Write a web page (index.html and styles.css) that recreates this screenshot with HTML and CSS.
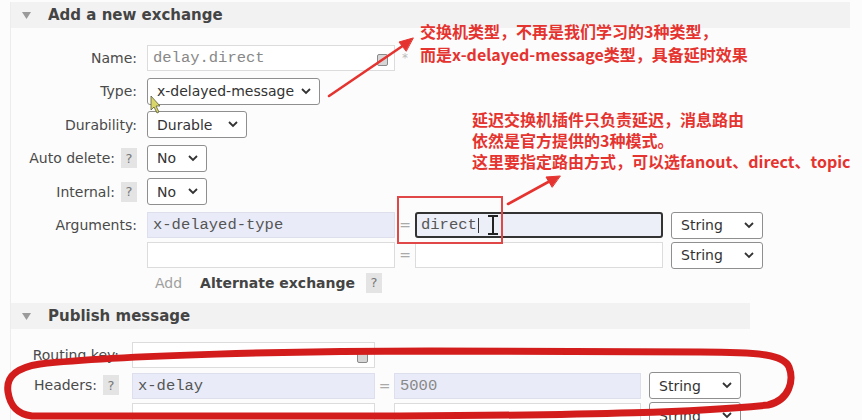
FILE: index.html
```html
<!DOCTYPE html>
<html lang="zh">
<head>
  <meta charset="UTF-8" />
  <title>Add a new exchange</title>
  <link rel="stylesheet" href="styles.css">
</head>
<body>
  <div class="page">
    <section class="section exchange">
      <h2 class="section-title">
        <svg class="caret" width="9" height="7" viewBox="0 0 9 7"><polygon points="0,0 9,0 4.5,7" fill="#9a9a9a"/></svg>
        Add a new exchange
      </h2>

      <div class="form">
        <div class="row">
          <div class="lbl">Name:</div>
          <div class="input wide">
            <span class="mono light">delay.direct</span>
            <span class="kbd-icon"></span>
          </div>
          <span class="star">*</span>
        </div>

        <div class="row">
          <div class="lbl">Type:</div>
          <div class="select w-type">x-delayed-message<svg class="chev" width="10" height="7" viewBox="0 0 10 7"><polyline points="1,1 5,5 9,1" fill="none" stroke="#333" stroke-width="1.8"/></svg></div>
        </div>

        <div class="row">
          <div class="lbl">Durability:</div>
          <div class="select w-dur">Durable<svg class="chev" width="10" height="7" viewBox="0 0 10 7"><polyline points="1,1 5,5 9,1" fill="none" stroke="#333" stroke-width="1.8"/></svg></div>
        </div>

        <div class="row">
          <div class="lbl">Auto delete: <span class="help">?</span></div>
          <div class="select w-no">No<svg class="chev" width="10" height="7" viewBox="0 0 10 7"><polyline points="1,1 5,5 9,1" fill="none" stroke="#333" stroke-width="1.8"/></svg></div>
        </div>

        <div class="row">
          <div class="lbl">Internal: <span class="help">?</span></div>
          <div class="select w-no">No<svg class="chev" width="10" height="7" viewBox="0 0 10 7"><polyline points="1,1 5,5 9,1" fill="none" stroke="#333" stroke-width="1.8"/></svg></div>
        </div>

        <div class="row top">
          <div class="lbl">Arguments:</div>
          <div class="args">
            <div class="kv">
              <div class="input wide filled"><span class="mono">x-delayed-type</span></div>
              <span class="eq">=</span>
              <div class="input wide focused"><span class="mono">direct</span><span class="caret-line"></span></div>
              <div class="select w-str">String<svg class="chev" width="10" height="7" viewBox="0 0 10 7"><polyline points="1,1 5,5 9,1" fill="none" stroke="#333" stroke-width="1.8"/></svg></div>
            </div>
            <div class="kv">
              <div class="input wide"></div>
              <span class="eq">=</span>
              <div class="input wide"></div>
              <div class="select w-str">String<svg class="chev" width="10" height="7" viewBox="0 0 10 7"><polyline points="1,1 5,5 9,1" fill="none" stroke="#333" stroke-width="1.8"/></svg></div>
            </div>
            <div class="add-row">
              <span class="add">Add</span>
              <span class="alt">Alternate exchange</span>
              <span class="help">?</span>
            </div>
          </div>
        </div>
      </div>
    </section>

    <section class="section publish">
      <h2 class="section-title">
        <svg class="caret" width="9" height="7" viewBox="0 0 9 7"><polygon points="0,0 9,0 4.5,7" fill="#9a9a9a"/></svg>
        Publish message
      </h2>

      <div class="form">
        <div class="row">
          <div class="lbl">Routing key:</div>
          <div class="input pwide"><span class="kbd-icon"></span></div>
        </div>
        <div class="row top">
          <div class="lbl">Headers: <span class="help">?</span></div>
          <div class="args">
            <div class="kv">
              <div class="input pwide filled"><span class="mono">x-delay</span></div>
              <span class="eq">=</span>
              <div class="input pval filled"><span class="mono light">5000</span></div>
              <div class="select w-str">String<svg class="chev" width="10" height="7" viewBox="0 0 10 7"><polyline points="1,1 5,5 9,1" fill="none" stroke="#333" stroke-width="1.8"/></svg></div>
            </div>
            <div class="kv">
              <div class="input pwide"></div>
              <span class="eq">=</span>
              <div class="input pval"></div>
              <div class="select w-str">String<svg class="chev" width="10" height="7" viewBox="0 0 10 7"><polyline points="1,1 5,5 9,1" fill="none" stroke="#333" stroke-width="1.8"/></svg></div>
            </div>
          </div>
        </div>
      </div>
    </section>
  </div>

  <!-- annotations drawn over the screenshot -->
  <div class="note note-type">
    <div>交换机类型，不再是我们学习的3种类型，</div>
    <div>而是x-delayed-message类型，具备延时效果</div>
  </div>
  <div class="note note-route">
    <div>延迟交换机插件只负责延迟，消息路由</div>
    <div>依然是官方提供的3种模式。</div>
    <div>这里要指定路由方式，可以选fanout、direct、topic</div>
  </div>
  <div class="mark-box"></div>

  <svg class="overlay" width="862" height="420" viewBox="0 0 862 420">
    <g stroke="#e5332f" stroke-width="2.6" fill="#e5332f" stroke-linecap="round">
      <line x1="329" y1="96" x2="404" y2="45"/>
      <polygon points="413,38 399,42 406,51" stroke-width="1"/>
      <line x1="508" y1="204" x2="550" y2="181"/>
      <polygon points="560,176 546,177 552,187" stroke-width="1"/>
    </g>
    <path class="loop" d="M 430 351 C 300 351 120 355 40 364 C 14 368 6 378 8 392 C 10 405 16 414 32 416 L 400 416 C 600 415 700 412 768 405 C 790 400 794 380 789 367 C 784 355 762 352 700 352 L 430 351 Z"/>
    <!-- text cursor -->
    <g stroke="#222" stroke-width="2" fill="none">
      <line x1="493" y1="216" x2="493" y2="234"/>
      <line x1="488" y1="216" x2="498" y2="216"/>
      <line x1="488" y1="234" x2="498" y2="234"/>
    </g>
    <!-- mouse pointer -->
    <polygon points="151,96 151,110 154,107 157,113 159,112 156,106 160,106" fill="#d9d66a" stroke="#5a5a3a" stroke-width="0.8"/>
  </svg>
</body>
</html>
```

FILE: styles.css
```css
body {
  margin: 0;
  width: 862px;
  height: 420px;
  overflow: hidden;
  position: relative;
  background: #fcfcfc;
  font-family: "DejaVu Sans", Verdana, sans-serif;
  font-size: 14px;
  color: #4a4a4a;
}

.page {
  padding-top: 2px;
}

.section {
  margin-left: 10px;
  border-left: 1px solid #ececec;
}

.section-title {
  margin: 0 12px 0 0;
  height: 26px;
  padding-left: 11px;
  display: flex;
  align-items: center;
  gap: 17px;
  background: #f2f2f2;
  font-size: 15px;
  font-weight: bold;
  color: #444;
}

.caret {
  flex: none;
}

.exchange .form {
  padding: 16px 0 4px;
}

.publish .section-title {
  width: 728px;
}

.publish .form {
  padding-top: 12px;
}

.row {
  display: flex;
  align-items: center;
  min-height: 27px;
  margin-bottom: 6.5px;
}

.row.top {
  align-items: flex-start;
}

.row.top .lbl {
  height: 26px;
}

.publish .row {
  margin-bottom: 4px;
}

.lbl {
  width: 126px;
  margin-right: 10px;
  display: flex;
  justify-content: flex-end;
  align-items: center;
  gap: 6px;
  flex: none;
}

.publish .lbl {
  width: 108px;
  margin-right: 13px;
}

.help {
  display: inline-flex;
  align-items: center;
  justify-content: center;
  width: 16px;
  height: 20px;
  background: #e4e4e4;
  color: #777;
  font-size: 13px;
}

.input {
  height: 26px;
  box-sizing: border-box;
  border: 1px solid #dcdcdc;
  background: #fff;
  display: flex;
  align-items: center;
  padding-left: 5px;
  position: relative;
}

.input.wide {
  width: 248px;
}

.input.pwide {
  width: 243px;
}

.input.pval {
  width: 247px;
}

.input.filled {
  background: #e9ecf8;
  border-color: #dde0ec;
}

.input.focused {
  background: #eceef8;
  border: 2px solid #333;
  border-radius: 3px;
  padding-left: 4px;
}

.mono {
  font-family: "Liberation Mono", "Courier New", monospace;
  font-size: 15.5px;
  color: #555;
}

.mono.light {
  color: #888;
}

.caret-line {
  width: 1px;
  height: 15px;
  background: #333;
  margin-left: 1px;
}

.kbd-icon {
  position: absolute;
  right: 6px;
  top: 8px;
  width: 9px;
  height: 10px;
  border: 1px solid #8a8a8a;
  border-radius: 2px;
  background: #d6d6d6;
}

.star {
  margin-left: 7px;
  color: #bbb;
  font-size: 12px;
}

.select {
  height: 27px;
  box-sizing: border-box;
  border: 1px solid #8f8f8f;
  border-radius: 3px;
  background: #fff;
  display: flex;
  align-items: center;
  justify-content: space-between;
  padding: 0 8px 0 9px;
  color: #333;
  font-size: 14px;
}

.w-type { width: 173px; }
.w-dur { width: 100px; }
.w-no { width: 60px; }
.w-str { width: 92px; margin-left: 8px; }

.args {
  display: flex;
  flex-direction: column;
  gap: 3px;
}

.kv {
  display: flex;
  align-items: center;
}

.eq {
  width: 20px;
  text-align: center;
  color: #aaa;
}

.publish .eq {
  width: 19px;
}

.add-row {
  display: flex;
  align-items: center;
  gap: 18px;
  margin-top: 1px;
  padding-left: 8px;
}

.add {
  color: #a0a0a0;
}

.alt {
  font-weight: bold;
  color: #444;
  margin-right: -7px;
}

.note {
  position: absolute;
  color: #e5332f;
  font-family: "Noto Sans CJK SC", "Noto Sans", sans-serif;
  font-weight: bold;
  font-size: 16px;
  white-space: nowrap;
}

.note div {
  height: 21px;
  line-height: 21px;
  overflow: visible;
}

.note-type {
  left: 420px;
  top: 20px;
}

.note-type div {
  height: 23px;
  line-height: 23px;
}

.note-route {
  left: 472px;
  top: 109px;
}

.mark-box {
  position: absolute;
  left: 397px;
  top: 196px;
  width: 102px;
  height: 44px;
  border: 2px solid #e04848;
}

.overlay {
  position: absolute;
  left: 0;
  top: 0;
  pointer-events: none;
}

.loop {
  fill: none;
  stroke: #d31d1d;
  stroke-width: 7;
  stroke-linejoin: round;
}
```
